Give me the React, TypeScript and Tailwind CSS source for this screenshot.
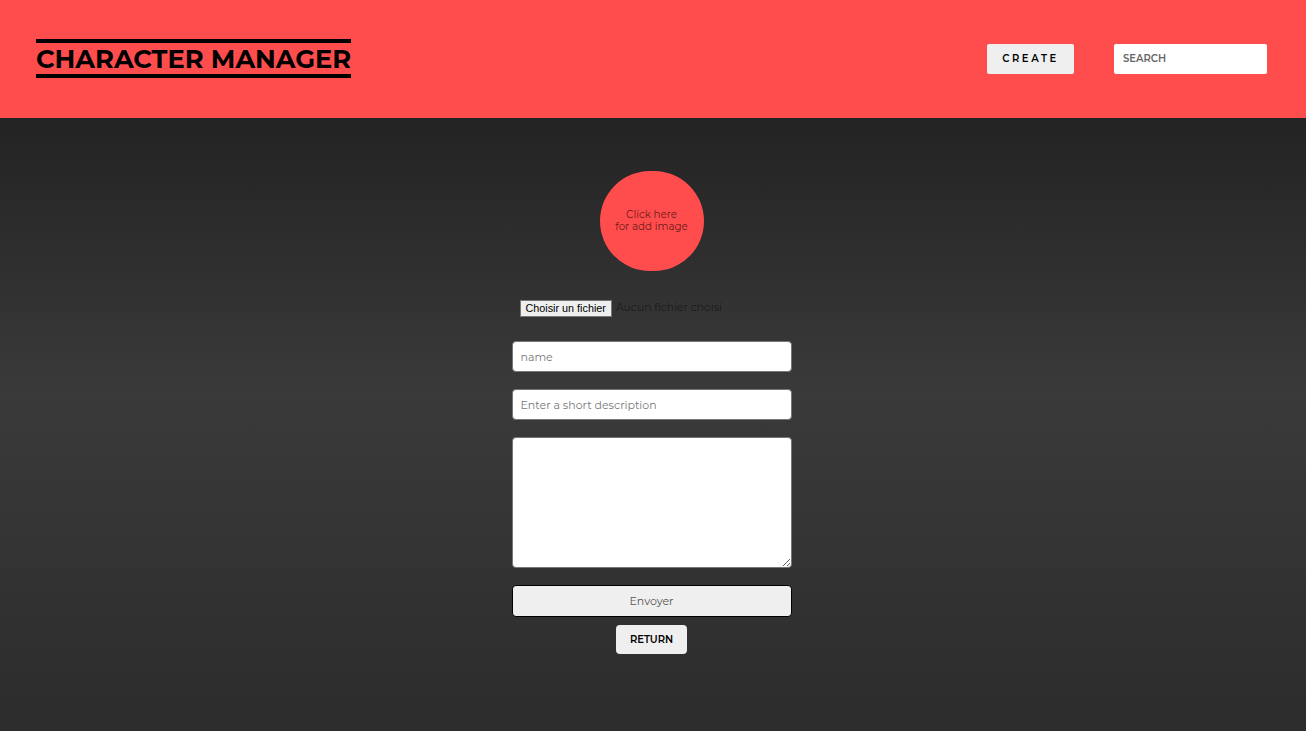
import React from "react";

export default function App() {
  const font = { fontFamily: "Montserrat, 'DejaVu Sans', 'Noto Sans', sans-serif" };
  return (
    <div className="w-full h-[731px] flex flex-col" style={font}>
      <header className="h-[118px] bg-[#ff4d4d] flex items-center justify-between pl-[36px] pr-[39px]">
        <div className="flex flex-col -mt-[2px]">
          <div className="h-[4px] bg-black" />
          <h1 className="text-[25.7px] leading-[31px] font-bold text-black">CHARACTER MANAGER</h1>
          <div className="h-[4px] bg-black" />
        </div>
        <div className="flex items-center gap-[40px] -mt-[1px]">
          <button className="w-[87px] h-[30px] bg-[#efefef] rounded-[2px] text-[10px] font-semibold tracking-[2.6px] text-black">
            CREATE
          </button>
          <input
            className="w-[153px] h-[30px] bg-white rounded-[2px] px-[9px] text-[10px] font-semibold outline-none placeholder:text-[#666]"
            placeholder="SEARCH"
          />
        </div>
      </header>
      <main className="flex-1 bg-[linear-gradient(180deg,#232323_0%,#3a3a3a_45%,#2c2c2c_100%)] flex flex-col items-center pt-[53px] pr-[3px]">
        <div className="w-[104px] h-[100px] rounded-full bg-[#ff4d4d] flex flex-col items-center justify-center text-[10.3px] leading-[12px] text-[#6e1a1a]">
          <span>Click here</span>
          <span>for add image</span>
        </div>
        <div className="mt-[29px] w-[280px] flex items-center pl-[8px]">
          <span
            className="h-[17px] px-[5px] bg-[#efefef] border border-[#767676] text-black text-[10.8px] leading-[15px]"
            style={{ fontFamily: "'Liberation Sans', Arial, sans-serif" }}
          >
            Choisir un fichier
          </span>
          <span className="ml-[4px] text-[#1a1a1a] text-[10.8px]">Aucun fichier choisi</span>
        </div>
        <div className="mt-[24px] w-[280px] flex flex-col">
          <input
            className="h-[31px] bg-white rounded-[4px] border border-[#767676] px-[8px] text-[11px] outline-none placeholder:text-[#777]"
            placeholder="name"
          />
          <input
            className="mt-[17px] h-[31px] bg-white rounded-[4px] border border-[#767676] px-[8px] text-[11px] outline-none placeholder:text-[#777]"
            placeholder="Enter a short description"
          />
          <textarea className="mt-[17px] h-[131px] bg-white rounded-[4px] border border-[#767676] p-[8px] text-[11px] outline-none" />
          <button className="mt-[17px] h-[32px] bg-[#efefef] rounded-[4px] border border-black text-[11px] text-[#555]">
            Envoyer
          </button>
        </div>
        <button className="mt-[8px] w-[71px] h-[29px] bg-[#efefef] rounded-[4px] text-[10px] font-semibold text-black">
          RETURN
        </button>
      </main>
    </div>
  );
}
